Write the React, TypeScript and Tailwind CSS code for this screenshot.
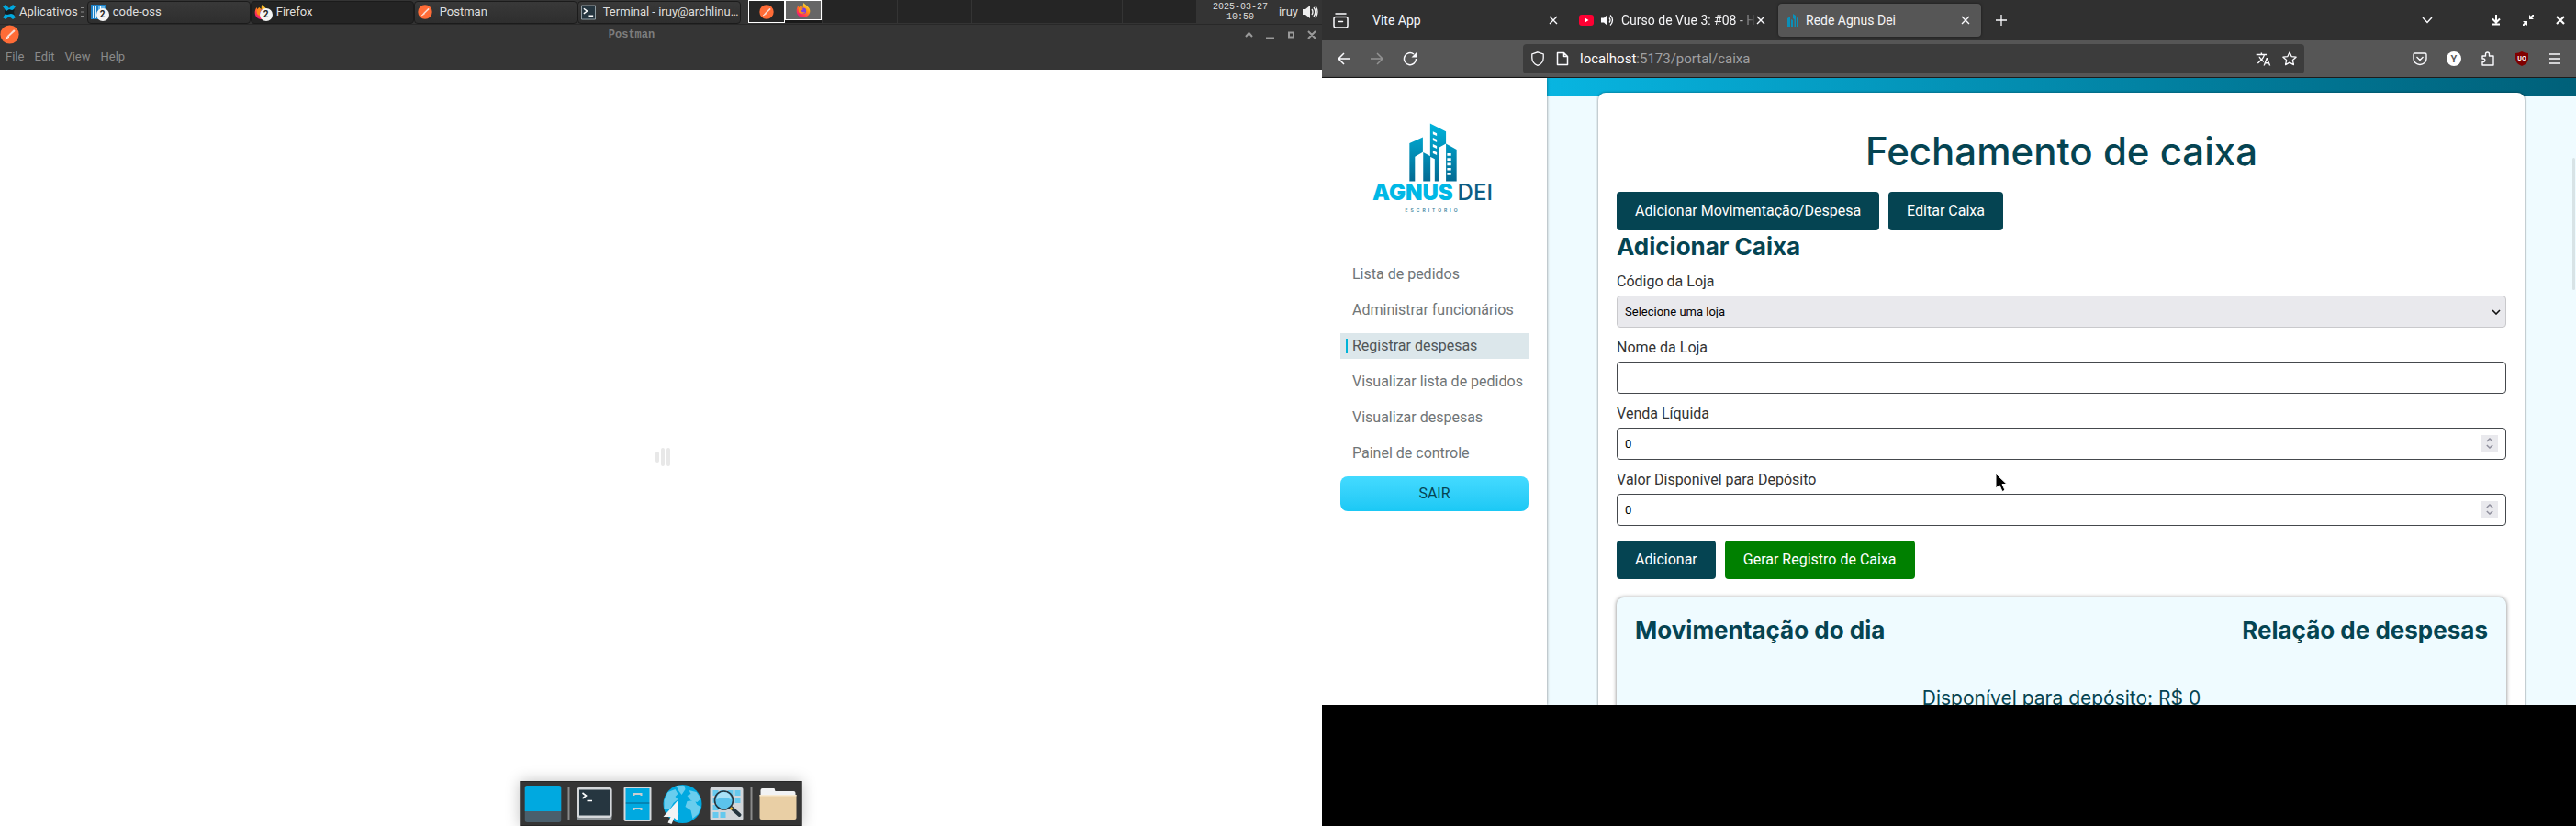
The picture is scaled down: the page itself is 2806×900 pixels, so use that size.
import type { ReactNode } from "react";
import { MdTranslate } from "react-icons/md";

function PostmanIcon({ className }: { className: string }) {
  return (
    <svg viewBox="0 0 22 22" className={className} aria-hidden="true">
      <circle cx="11" cy="11" r="10.6" fill="#ff6c37" />
      <path d="M5.5 16.5 9 12l6.2-6c1.2-1 2.6.4 1.6 1.6l-6.300 5.800z" fill="#f6ded5" />
      <path d="m5.500 16.500 5-2.500" stroke="#fff" strokeWidth="1" />
    </svg>
  );
}

function FirefoxIcon({ className }: { className: string }) {
  return (
    <svg viewBox="0 0 24 24" className={className} aria-hidden="true">
      <defs>
        <linearGradient id="foxBody" x1="0.85" y1="0" x2="0.2" y2="1">
          <stop offset="0" stopColor="#fff44f" />
          <stop offset="0.4" stopColor="#ff980e" />
          <stop offset="0.75" stopColor="#ff3750" />
          <stop offset="1" stopColor="#e31587" />
        </linearGradient>
      </defs>
      <path
        d="M13 0c1 2.500 4 4 6 6 2 1.700 4 4 4 7.500C23 19.500 18 24 12 24S1 19.500 1 13c0-3 1-6 3-8.500 0 1.500.5 2.500 1.500 3C6 6 7 5 8.500 4.500 9 6 10 7 12 7c-.8-2.500-.2-5 1-7z"
        fill="url(#foxBody)"
      />
      <circle cx="12" cy="13" r="4.800" fill="#7a3fe0" />
      <path d="M4 9c3-1.500 6 0 8 1.500-1.500 1.200-3 1-3 2.500 0 2 3 3.500 6 1.500-1.500 4-8 4.500-10.500.5z" fill="#ff8a16" />
    </svg>
  );
}

function CodeIcon() {
  return (
    <svg viewBox="0 0 16 16" className="size-4" aria-hidden="true">
      <path d="M0 0h16v16H0z" fill="#1b7fc4" />
      <path d="M2 1h1v14H2zM5 1h1v14H5z" fill="#d9eefb" />
      <path d="M8 1h7v5H8z" fill="#67b7ea" />
      <path d="M10 1h1v5h-1z" fill="#fff" />
    </svg>
  );
}

function TerminalIcon() {
  return (
    <svg viewBox="0 0 17 17" className="size-[17px]" aria-hidden="true">
      <path d="M.5.5h16v16H.5z" fill="#263640" stroke="#9aa6ad" />
      <path d="m3 4 4 3-4 3M9 12.500h5" fill="none" stroke="#fff" strokeWidth="1.500" />
    </svg>
  );
}

function Badge() {
  return (
    <span className="absolute left-1.5 top-1 flex size-3.5 items-center justify-center rounded-full bg-[#f4f4f4] text-[10px] leading-none font-bold text-[#222]">
      2
    </span>
  );
}

function Task({ icon, label, badge, active }: { icon: ReactNode; label: string; badge?: boolean; active?: boolean }) {
  return (
    <button
      className={
        "flex h-[25px] w-[178px] min-w-0 items-center gap-2 rounded border border-[#1b1b1b] pl-[3px] text-[13px] text-[#dedede] " +
        (active ? "bg-[#242424]" : "bg-linear-to-b from-[#393939] to-[#2e2e2e]")
      }
    >
      <span className="relative flex w-4 shrink-0">
        {icon}
        {badge && <Badge />}
      </span>
      <span className="whitespace-nowrap">{label}</span>
    </button>
  );
}

function SystemPanel() {
  return (
    <header className="flex h-[26px] items-center bg-[#343434] text-[13px] text-[#dedede]">
      <button className="flex items-center gap-1 pl-[3px]">
        <svg viewBox="0 0 14 16" className="h-4 w-3.5" aria-hidden="true">
          <path d="m0 2 3-2 4 4 4-4 3 2-3 4v4l3 4-3 2-4-3-4 3-3-2 3-4V6z" fill="#00a9e0" />
          <path d="m2 6 2 1 3-2 3 1 3-1-1 3 1 3-4-1-4 1-3-1z" fill="#111d22" />
        </svg>
        Aplicativos
      </button>
      <svg viewBox="0 0 4 10" className="mx-[3px] h-2.5 w-1 shrink-0" aria-hidden="true">
        <path d="M0 .5h4M0 5h4M0 9.500h4" stroke="#8a8a8a" />
      </svg>
      <nav className="flex">
        <Task icon={<CodeIcon />} label="code-oss" badge />
        <Task icon={<FirefoxIcon className="size-4" />} label="Firefox" badge active />
        <Task icon={<PostmanIcon className="size-4" />} label="Postman" />
        <Task icon={<TerminalIcon />} label="Terminal - iruy@archlinu…" />
      </nav>
      <div className="ml-2 flex h-full min-w-0 flex-1 items-start gap-px bg-[#343434]">
        <div className="flex h-[25px] flex-1 items-start bg-[#1a1a1a]">
          <div className="flex h-full flex-1 items-center justify-center border border-white bg-[#262626]">
            <PostmanIcon className="size-4" />
          </div>
          <div className="flex h-[22px] flex-1 items-center justify-center border border-white bg-[#666]">
            <FirefoxIcon className="size-4" />
          </div>
        </div>
        <div className="h-[25px] flex-1 bg-[#252525]" />
        <div className="h-[25px] flex-1 bg-[#252525]" />
        <div className="h-[25px] flex-1 bg-[#252525]" />
        <div className="h-[25px] flex-1 bg-[#252525]" />
        <div className="h-[25px] flex-1 bg-[#252525]" />
      </div>
      <time className="ml-[18px] mr-3 text-center font-['Liberation_Mono',monospace] text-[10px] leading-[11px]">
        2025-03-27
        <br />
        10:50
      </time>
      <span>iruy</span>
      <svg viewBox="0 0 18 16" className="ml-1 mr-1 h-4 w-[18px]" aria-hidden="true">
        <path d="M1 5h3l5-4v14l-5-4H1z" fill="#eee" />
        <path d="M11 5q2 3 0 6M13 3q3.500 5 0 10M15 1.500q4 6.500 0 13" fill="none" stroke="#eee" strokeWidth="1.400" />
      </svg>
    </header>
  );
}

function DockDivider() {
  return <span className="h-[35px] w-0.5 bg-[#8a8a8a]" />;
}

function Dock() {
  return (
    <nav className="absolute bottom-0 left-1/2 flex h-[49px] -translate-x-1/2 items-center gap-[7px] border border-[#262626] bg-[#353535] px-1 shadow-[0_0_16px_rgba(0,0,0,0.25)]">
      <button aria-label="Mostrar área de trabalho">
        <svg viewBox="0 0 40 40" className="size-10">
          <rect width="40" height="40" rx="3" fill="#4a5f6c" />
          <path d="M0 28V3a3 3 0 0 1 3-3h34a3 3 0 0 1 3 3v25z" fill="#00a9e0" />
        </svg>
      </button>
      <DockDivider />
      <button aria-label="Terminal">
        <svg viewBox="0 0 40 38" className="h-[38px] w-10">
          <rect x="1" y="1" width="38" height="36" rx="3" fill="#8f9599" />
          <rect x="1" y="1" width="38" height="33" rx="3" fill="#d5d8db" />
          <rect x="3.500" y="3.500" width="33" height="28" fill="#263640" />
          <path d="m7 7 4 3-4 3M12 15.500h5.500" fill="none" stroke="#fff" strokeWidth="1.600" />
        </svg>
      </button>
      <button aria-label="Gerenciador de arquivos" className="px-1">
        <svg viewBox="0 0 32 40" className="h-10 w-8">
          <rect x="1" y="1" width="30" height="38" rx="2" fill="#d5d8db" />
          <path d="M3 3h26v15H3zM3 20h26v17H3z" fill="#00a9e0" />
          <path d="M3 18h26v2H3z" fill="#0385b5" />
          <path d="M12 11V9h8v2M12 27v-2h8v2" fill="none" stroke="#c9cdd0" strokeWidth="2" />
        </svg>
      </button>
      <button aria-label="Navegador web">
        <svg viewBox="0 0 44 44" className="size-[44px]">
          <circle cx="22" cy="22" r="21" fill="#00a9e0" />
          <path
            d="M15 2h9l1 4-4 6-3-4zM6 9l8-3 3 5-3 3 3 3-5 4-4 7-6-1V18zM29 7l8 2 5 7-4 4-7-2-4-5 4-2zM27 19l8-1 3 5 4 2-3 8-6 5-2-9-6-4zM8 30l7-2 3 5-4 5z"
            fill="#69cdee"
          />
          <path d="M17 18v23l-4-4-3 7-4-1.500 3-6.500H1z" fill="#f2f4f5" />
        </svg>
      </button>
      <button aria-label="Localizador de aplicativos">
        <svg viewBox="0 0 38 38" className="size-[38px]">
          <rect x="1" y="1" width="36" height="36" rx="2" fill="#d2d6da" />
          <path
            d="M4 4h6v6H4zM12 4h6v6h-6zM20 4h6v6h-6zM28 4h6v6h-6zM4 12h6v6H4zM28 12h6v6h-6zM4 20h6v6H4zM4 28h6v6H4zM12 28h6v6h-6z"
            fill="#66c9ee"
          />
          <path d="m24 23 9 8" stroke="#263640" strokeWidth="4" strokeLinecap="round" />
          <path d="m22 22 3 3" stroke="#e8b22a" strokeWidth="3" />
          <circle cx="16" cy="15" r="10" fill="#5cc3ec" stroke="#263640" strokeWidth="1.600" />
          <path d="M8 14a8 8 0 0 1 16 0q-8-4-16 0z" fill="#a9e1f6" />
        </svg>
      </button>
      <DockDivider />
      <button aria-label="Pasta pessoal">
        <svg viewBox="0 0 42 36" className="h-9 w-[42px]">
          <path d="M2 10V3q0-2 2-2h13l1 3h20q2 0 2 2v5z" fill="#f1f2f3" />
          <path d="M1 8h40v25q0 2-2 2H3q-2 0-2-2z" fill="#e9cfa5" />
          <path d="M1 8h40v1.500H1z" fill="#f8e9d0" />
        </svg>
      </button>
    </nav>
  );
}

function PostmanWindow() {
  return (
    <section className="relative flex min-w-0 flex-col overflow-hidden bg-white">
      <SystemPanel />
      <div className="flex flex-col border-t border-[#282828] bg-[#353535] text-[#8a8a8a]">
        <div className="grid h-[21px] grid-cols-[1fr_auto_1fr] items-center">
          <PostmanIcon className="size-[21px]" />
          <h1 className="pr-16 font-['Liberation_Mono',monospace] text-xs font-bold text-[#7d7d7d]">Postman</h1>
          <div className="flex justify-end pr-1.5">
            <svg viewBox="0 0 78 10" className="h-2.5 w-[78px]" aria-hidden="true">
              <path d="m1 7 3.500-4L8 7M23 8.500h9" fill="none" stroke="#9a9a9a" strokeWidth="2" />
              <path d="M48 2.500h5v5h-5zM69 1l8 8M77 1l-8 8" fill="none" stroke="#9a9a9a" strokeWidth="2" />
            </svg>
          </div>
        </div>
        <nav className="flex h-7 items-center gap-[11px] px-1.5 text-[13px]">
          <button>File</button>
          <button>Edit</button>
          <button>View</button>
          <button>Help</button>
        </nav>
      </div>
      <div className="h-10 border-b border-[#e6e6e6]" />
      <div className="flex flex-1 items-center justify-center pb-5 pl-1">
        <svg viewBox="0 0 16 20" className="h-5 w-4" aria-hidden="true">
          <path d="M2 6v8M8 2v16M14 2v16" stroke="#e8e8e8" strokeWidth="4" strokeLinecap="round" />
        </svg>
      </div>
      <Dock />
    </section>
  );
}

function CloseGlyph() {
  return (
    <svg viewBox="0 0 10 10" className="size-2.5" aria-hidden="true">
      <path d="m1 1 8 8M9 1 1 9" stroke="#fbfbfe" strokeWidth="1.400" />
    </svg>
  );
}

function TabStrip() {
  return (
    <div className="flex h-11 items-center bg-[#303030] text-sm text-[#f4f4f6]">
      <button aria-label="Firefox View" className="flex h-full items-center border-r border-[#6a6a6a] pl-3 pr-[13px]">
        <svg viewBox="0 0 17 17" className="size-[17px]" fill="none" stroke="#fbfbfe" strokeWidth="1.500">
          <path d="M3 1h11" strokeLinecap="round" />
          <rect x="1" y="4.500" width="15" height="11.500" rx="2" />
          <path d="M6.500 9.500h4" strokeLinecap="round" />
        </svg>
      </button>
      <div className="flex w-[226px] items-center pl-3 pr-3">
        <span className="flex-1">Vite App</span>
        <button aria-label="Fechar aba">
          <CloseGlyph />
        </button>
      </div>
      <div className="flex w-[228px] items-center pl-[11px] pr-3.5">
        <svg viewBox="0 0 16 12" className="mr-2 h-3 w-4 shrink-0" aria-hidden="true">
          <rect width="16" height="12" rx="3" fill="#ff0033" />
          <path d="m6.500 3.500 4 2.500-4 2.500z" fill="#fff" />
        </svg>
        <svg viewBox="0 0 14 14" className="mr-2 size-3.5 shrink-0" aria-hidden="true">
          <path d="M0 4.500h3L7 1v12L3 9.500H0z" fill="#fbfbfe" />
          <path d="M9 4.500q2 2.500 0 5M10 1.500q5 5.500 0 11" fill="none" stroke="#fbfbfe" strokeWidth="1.300" />
        </svg>
        <span className="min-w-0 flex-1 whitespace-nowrap mask-r-from-85%">Curso de Vue 3: #08 - Hi</span>
        <button aria-label="Fechar aba">
          <CloseGlyph />
        </button>
      </div>
      <div className="flex h-9 w-[221px] items-center gap-2 rounded bg-[#565656] pl-2.5 pr-3 shadow-[0_0_3px_rgba(0,0,0,0.5)]">
        <svg viewBox="0 0 12 14" className="h-3.5 w-3 shrink-0" aria-hidden="true">
          <path d="M0 14V5l3-2v11zM4 14V6l2 1v7zM6 5V0l3 2v12H7.500V6zM10 14V4l2 1v9z" fill="#0b8fb8" />
        </svg>
        <span className="flex-1">Rede Agnus Dei</span>
        <button aria-label="Fechar aba">
          <CloseGlyph />
        </button>
      </div>
      <button aria-label="Nova aba" className="ml-4">
        <svg viewBox="0 0 12 12" className="size-3">
          <path d="M6 0v12M0 6h12" stroke="#fbfbfe" strokeWidth="1.300" />
        </svg>
      </button>
      <div className="ml-auto flex items-center gap-6 pr-3">
        <button aria-label="Listar abas" className="mr-10">
          <svg viewBox="0 0 12 8" className="h-2 w-3">
            <path d="m1 1 5 5.500L11 1" fill="none" stroke="#fbfbfe" strokeWidth="1.400" />
          </svg>
        </button>
        <button aria-label="Minimizar">
          <svg viewBox="0 0 10 12" className="h-3 w-2.5">
            <path d="M5 0v8M1 4.500l4 4 4-4M1 10.500h8" fill="none" stroke="#fff" strokeWidth="2" />
          </svg>
        </button>
        <button aria-label="Restaurar">
          <svg viewBox="0 0 12 12" className="size-3">
            <path d="M7 0v5h5zM5 12V7H0z" fill="#fff" />
            <path d="m8 4 4-4M4 8l-4 4" stroke="#fff" strokeWidth="2" />
          </svg>
        </button>
        <button aria-label="Fechar">
          <svg viewBox="0 0 10 10" className="size-2.5">
            <path d="m1 1 8 8M9 1 1 9" stroke="#fff" strokeWidth="2.200" />
          </svg>
        </button>
      </div>
    </div>
  );
}

function AddressBar() {
  return (
    <div className="flex h-[41px] items-center border-b border-[#1c1c1c] bg-[#565656] text-[#fbfbfe]">
      <div className="flex w-[219px] shrink-0 items-center gap-5 pl-4">
        <button aria-label="Voltar">
          <svg viewBox="0 0 16 16" className="size-4" fill="none" stroke="#fbfbfe" strokeWidth="1.500">
            <path d="M15 8H2M8 2 2 8l6 6" />
          </svg>
        </button>
        <button aria-label="Avançar">
          <svg viewBox="0 0 16 16" className="size-4" fill="none" stroke="#929292" strokeWidth="1.500">
            <path d="M1 8h13M8 2l6 6-6 6" />
          </svg>
        </button>
        <button aria-label="Recarregar">
          <svg viewBox="0 0 16 16" className="size-4" fill="none" stroke="#fbfbfe" strokeWidth="1.500">
            <path d="M14.500 8A6.500 6.500 0 1 1 12 3" />
            <path d="M15 1v5.500H9.500z" fill="#fbfbfe" stroke="none" />
          </svg>
        </button>
      </div>
      <div className="flex h-8 w-[851px] min-w-0 items-center gap-3 rounded bg-[#3c3c3c] px-2">
        <svg viewBox="0 0 16 16" className="size-4 shrink-0" fill="none" stroke="#fbfbfe" strokeWidth="1.300" aria-hidden="true">
          <path d="M8 .8 14.200 3v4c0 4-2.700 7-6.200 8.300C4.500 14 1.800 11 1.800 7V3z" />
        </svg>
        <svg viewBox="0 0 14 16" className="h-4 w-3.5 shrink-0" fill="none" stroke="#fbfbfe" strokeWidth="1.500" aria-hidden="true">
          <path d="M1.500 1.500h7l4 4v9h-11zM8.500 1.500v4h4" strokeLinejoin="round" />
        </svg>
        <div className="flex-1 text-[15px]">
          localhost<span className="text-[#a0a0a2]">:5173/portal/caixa</span>
        </div>
        <button aria-label="Traduzir página">
          <MdTranslate className="size-[17px]" />
        </button>
        <button aria-label="Adicionar aos favoritos">
          <svg viewBox="0 0 16 16" className="size-4" fill="none" stroke="#fbfbfe" strokeWidth="1.300" strokeLinejoin="round">
            <path d="m8 1 2.100 4.600 5 .6-3.700 3.400 1 5L8 12.100l-4.400 2.500 1-5L.900 6.200l5-.6z" />
          </svg>
        </button>
      </div>
      <div className="ml-auto flex items-center gap-[21px] pr-4">
        <button aria-label="Salvar no Pocket">
          <svg viewBox="0 0 16 16" className="size-4" fill="none" stroke="#fbfbfe" strokeWidth="1.400">
            <path d="M2.500 2h11q1.500 0 1.500 1.500V8a7 6.500 0 0 1-14 0V3.500Q1 2 2.500 2zM4.500 6 8 9.500 11.500 6" />
          </svg>
        </button>
        <button className="flex size-4 items-center justify-center rounded-full bg-white text-[11px] leading-none font-bold text-[#565656]">
          Y
        </button>
        <button aria-label="Extensões">
          <svg viewBox="0 0 16 16" className="size-4" fill="none" stroke="#fbfbfe" strokeWidth="1.400" strokeLinejoin="round">
            <path d="M2 5h3.500V3a2 2 0 0 1 4 0v2H14v10H2v-3.500h1.500a1.800 1.800 0 0 0 0-3.500H2z" />
          </svg>
        </button>
        <button className="relative flex size-4 items-center justify-center text-[7px] leading-none font-bold text-white">
          <svg viewBox="0 0 16 16" className="absolute inset-0 size-4" aria-hidden="true">
            <path d="M8 0q3.500 2 7 2v5.500q0 6-7 8.500-7-2.500-7-8.500V2q3.500 0 7-2z" fill="#800000" />
          </svg>
          <span className="relative">UO</span>
        </button>
        <button aria-label="Menu">
          <svg viewBox="0 0 14 12" className="h-3 w-3.5">
            <path d="M1 1h12M1 6h12M1 11h12" stroke="#fbfbfe" strokeWidth="1.400" />
          </svg>
        </button>
      </div>
    </div>
  );
}

function Logo() {
  return (
    <div className="flex flex-col items-center pt-[49px] pr-1 font-['Inter',sans-serif]">
      <svg viewBox="282 71 157 192" className="h-16 w-[52px]" aria-hidden="true">
        <defs>
          <linearGradient id="tower" gradientUnits="userSpaceOnUse" x1="0" y1="72" x2="0" y2="262">
            <stop offset="0" stopColor="#00b4dc" />
            <stop offset="1" stopColor="#036a92" />
          </linearGradient>
        </defs>
        <g fill="url(#tower)">
          <path d="M283 137l44-20v49l-26 15v81h-18z" />
          <path d="M328 167l24 13v82h-24z" />
          <path d="M351 72l52 26v40l-23 13v111h-14v-73l-15-8z" />
          <path d="M403 138l35 20v104h-35z" />
        </g>
        <path
          d="M360 98l13 6v9l-13-6zM360 119l13 6v9l-13-6zM360 140l13 6v9l-13-6zM360 161l13 6v9l-13-6zM407 170h13v8h-13zM407 186h13v8h-13zM407 202h13v8h-13zM407 218h13v8h-13zM407 234h13v8h-13z"
          fill="#fff"
        />
      </svg>
      <div className="text-[24px] leading-6 font-black whitespace-nowrap text-[#00b8e6]">
        AGNUS <span className="font-medium text-[#0b5d85]">DEI</span>
      </div>
      <div className="mt-1 text-[5px] leading-[6px] font-semibold tracking-[3px] text-[#3c7f9c]">ESCRITÓRIO</div>
    </div>
  );
}

const links = [
  "Lista de pedidos",
  "Administrar funcionários",
  "Registrar despesas",
  "Visualizar lista de pedidos",
  "Visualizar despesas",
  "Painel de controle",
];

function Sidebar() {
  return (
    <aside className="z-10 flex w-[245px] shrink-0 flex-col bg-white px-5 text-base shadow-[0_0_3px_rgba(0,0,0,0.5)]">
      <Logo />
      <nav className="mt-[53px] flex flex-col gap-[11px]">
        {links.map((label) =>
          label === "Registrar despesas" ? (
            <a key={label} href="#despesas" className="flex h-7 items-center bg-[#dce7eb] pl-1.5 whitespace-nowrap text-[#505557]">
              <span className="mr-[5px] h-4 w-0.5 bg-[#00b4d8]" />
              {label}
            </a>
          ) : (
            <a key={label} href="#portal" className="flex h-7 items-center pl-[13px] whitespace-nowrap text-[#707577]">
              {label}
            </a>
          ),
        )}
        <button className="h-[38px] rounded-lg bg-linear-to-b from-[#43daff] to-[#1ac8f5] text-[#054452]">SAIR</button>
      </nav>
    </aside>
  );
}

function SpinButtons() {
  return (
    <span className="pointer-events-none absolute right-[9px] top-2 flex size-[18px] items-center justify-center bg-[#e9e9ed]">
      <svg viewBox="0 0 8 12" className="h-3 w-2" aria-hidden="true">
        <path d="m.8 4 3.200-3 3.200 3M.8 8 4 11l3.200-3" fill="none" stroke="#8f8f9d" strokeWidth="1.500" />
      </svg>
    </span>
  );
}

function Field({ id, label, children }: { id: string; label: string; children: ReactNode }) {
  return (
    <div className="flex flex-col gap-[3px]">
      <label htmlFor={id} className="leading-6 text-[#333]">
        {label}
      </label>
      <div className="relative">{children}</div>
    </div>
  );
}

const inputClass =
  "block h-[35px] w-full rounded border border-[#45494d] bg-white px-2 text-[13px] text-black [appearance:textfield] [&::-webkit-inner-spin-button]:appearance-none";
const buttonClass = "h-[42px] rounded px-5 text-white";
const headingClass = "font-['Inter',sans-serif] font-bold text-[26px] leading-9 text-[#054452]";

function CashClosing() {
  return (
    <div className="relative flex min-w-0 flex-1 flex-col overflow-hidden bg-[#effbff]">
      <div className="h-5 shrink-0 bg-linear-to-r from-[#08b5e1] to-[#006079]" />
      <main className="mx-[5%] -mt-1 flex flex-1 flex-col rounded-t-lg bg-white px-5 pt-[34px] shadow-[0_0_3px_rgba(0,0,0,0.5)]">
        <h1 className="mb-[14px] text-center font-['Inter',sans-serif] text-[42px] leading-[60px] font-medium text-[#054452]">
          Fechamento de caixa
        </h1>
        <div className="flex gap-2.5">
          <button className={buttonClass + " bg-[#054452]"}>Adicionar Movimentação/Despesa</button>
          <button className={buttonClass + " bg-[#054452]"}>Editar Caixa</button>
        </div>
        <h2 className={headingClass + " mb-2"}>Adicionar Caixa</h2>
        <form className="flex flex-col gap-2.5" onSubmit={(e) => e.preventDefault()}>
          <Field id="codigo" label="Código da Loja">
            <select
              id="codigo"
              className="block h-[35px] w-full appearance-none rounded border border-[#c9c9cc] bg-[#e9e9ed] px-2 text-[13px] text-black"
            >
              <option>Selecione uma loja</option>
            </select>
            <svg viewBox="0 0 10 6" className="pointer-events-none absolute right-1.5 top-[15px] h-1.5 w-2.5" aria-hidden="true">
              <path d="m1 1 4 4 4-4" fill="none" stroke="#111" strokeWidth="1.600" />
            </svg>
          </Field>
          <Field id="nome" label="Nome da Loja">
            <input id="nome" type="text" className={inputClass} />
          </Field>
          <Field id="venda" label="Venda Líquida">
            <input id="venda" type="number" defaultValue={0} className={inputClass} />
            <SpinButtons />
          </Field>
          <Field id="deposito" label="Valor Disponível para Depósito">
            <input id="deposito" type="number" defaultValue={0} className={inputClass} />
            <SpinButtons />
          </Field>
          <div className="mt-1.5 flex gap-2.5">
            <button className={buttonClass + " bg-[#054452]"}>Adicionar</button>
            <button type="button" className={buttonClass + " bg-[#008000]"}>
              Gerar Registro de Caixa
            </button>
          </div>
        </form>
        <section className="mt-5 flex-1 rounded-t-lg bg-[#effbff] px-5 pt-[18px] shadow-[0_0_4px_rgba(0,0,0,0.5)]">
          <div className="flex justify-between">
            <h2 className={headingClass}>Movimentação do dia</h2>
            <h2 className={headingClass}>Relação de despesas</h2>
          </div>
          <p className="mt-10 text-center font-['Inter',sans-serif] text-[21px] leading-8 whitespace-nowrap text-[#054452]">
            Disponível para depósito: R$ 0
          </p>
        </section>
      </main>
      <span className="absolute right-px top-[87px] h-36 w-[3px] rounded-sm bg-[#d8e3e6]" />
      <svg viewBox="0 0 14 22" className="absolute left-[488px] top-[430px] h-[22px] w-3.5" aria-hidden="true">
        <path d="M1 1v16l4-3.500 3 7 3-1.200-3-6.800h5z" fill="#000" stroke="#fff" strokeWidth="1" />
      </svg>
    </div>
  );
}

export default function App() {
  return (
    <div className="grid h-screen grid-cols-[1440fr_1366fr] overflow-hidden bg-black font-['Roboto',sans-serif]">
      <PostmanWindow />
      <div className="grid min-h-0 min-w-0 grid-rows-[768fr_132fr]">
        <div className="flex min-h-0 min-w-0 flex-col overflow-hidden">
          <TabStrip />
          <AddressBar />
          <div className="flex min-h-0 flex-1">
            <Sidebar />
            <CashClosing />
          </div>
        </div>
      </div>
    </div>
  );
}
